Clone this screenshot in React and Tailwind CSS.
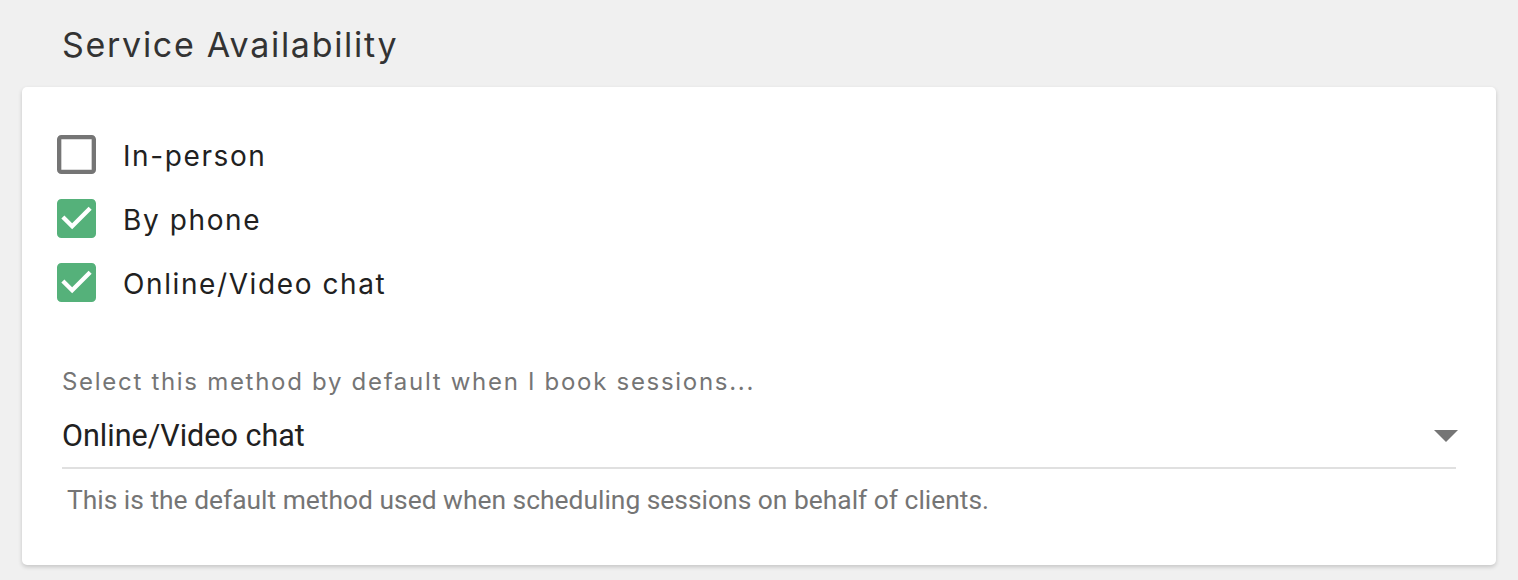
import React, { useState } from 'react';

const poppins = { fontFamily: 'Inter, "Noto Sans", sans-serif' };
const roboto = { fontFamily: 'Roboto, sans-serif' };

function Box({ checked }) {
  return (
    <svg width="39" height="39" viewBox="3 3 18 18" className="shrink-0" aria-hidden>
      {checked ? (
        <path
          d="M19 3H5c-1.11 0-2 .9-2 2v14c0 1.1.89 2 2 2h14c1.11 0 2-.9 2-2V5c0-1.1-.89-2-2-2zm-9 14l-5-5 1.41-1.41L10 14.17l7.59-7.59L19 8l-9 9z"
          fill="#55b17a"
        />
      ) : (
        <path
          d="M19 5v14H5V5h14m0-2H5c-1.1 0-2 .9-2 2v14c0 1.1.9 2 2 2h14c1.1 0 2-.9 2-2V5c0-1.1-.9-2-2-2z"
          fill="#757575"
        />
      )}
    </svg>
  );
}

export default function App() {
  const [opts, setOpts] = useState({ inPerson: false, phone: true, online: true });

  const items = [
    { id: 'inPerson', label: 'In-person' },
    { id: 'phone', label: 'By phone' },
    { id: 'online', label: 'Online/Video chat' },
  ];

  return (
    <div className="min-h-[580px] bg-[#f0f0f0] px-[22px] pt-[24px]">
      <h2 className="pl-[40px] text-[34px] leading-[42px] tracking-[1.7px] text-[#333333] font-normal" style={poppins}>
        Service Availability
      </h2>
      <div className="mt-[21px] bg-white rounded-[5px] shadow-[0_2px_4px_rgba(0,0,0,0.18)] px-[40px] pt-[48px] pb-[50px]">
        <div className="flex flex-col gap-[25px] -ml-[5px]">
          {items.map((it) => (
            <button
              key={it.id}
              type="button"
              onClick={() => setOpts((o) => ({ ...o, [it.id]: !o[it.id] }))}
              className="flex items-center gap-[27px] h-[39px] text-left"
            >
              <Box checked={opts[it.id]} />
              <span className="translate-y-[2px] text-[28px] leading-[39px] tracking-[1.6px] text-[#212121]" style={poppins}>
                {it.label}
              </span>
            </button>
          ))}
        </div>

        <p className="mt-[65px] text-[24px] leading-[30px] tracking-[1.7px] text-[#757575]" style={poppins}>
          Select this method by default when I book sessions...
        </p>
        <div
          className="mt-[16px] flex items-center justify-between border-b-2 border-[#e0e0e0] h-[56px] pb-[8px]"
          style={roboto}
        >
          <span className="text-[30.5px] text-[#212121]">Online/Video chat</span>
          <svg width="24" height="12" viewBox="0 0 24 12" className="mr-[-2px]" aria-hidden>
            <path d="M0 0h24L12 12z" fill="#757575" />
          </svg>
        </div>
        <p className="mt-[16px] pl-[5px] text-[26.4px] leading-[30px] text-[#757575]" style={roboto}>
          This is the default method used when scheduling sessions on behalf of clients.
        </p>
      </div>
    </div>
  );
}
